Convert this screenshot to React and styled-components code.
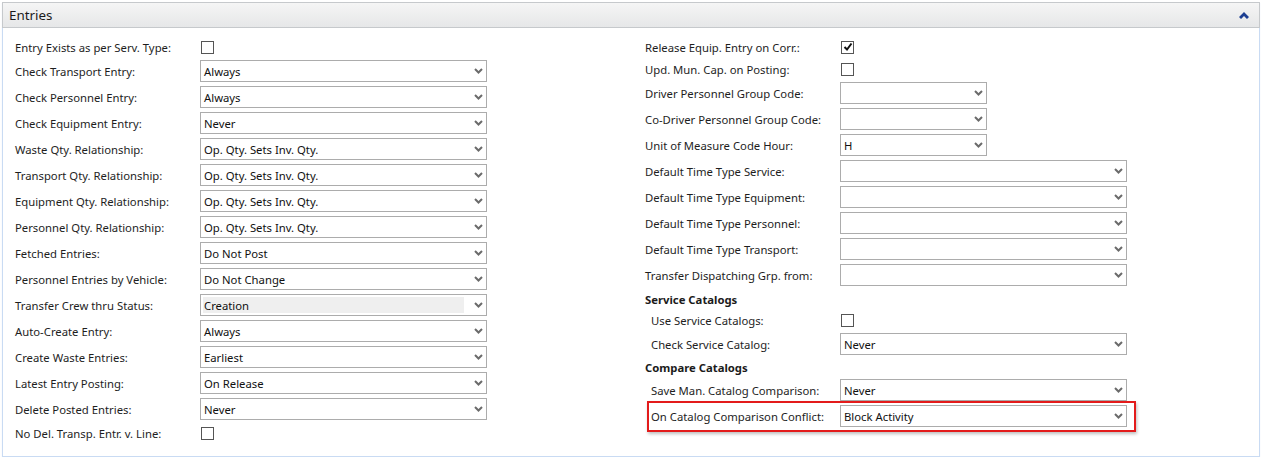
import React from 'react';
import styled, { createGlobalStyle } from 'styled-components';

const GlobalStyle = createGlobalStyle`
  body {
    margin: 0;
    background: #ffffff;
    font-family: "Noto Sans", "Open Sans", Arial, sans-serif;
    color: #1e1e1e;
  }
`;

const Panel = styled.section`
  margin: 2px 3px 0 2px;
  height: 455px;
  box-sizing: border-box;
  border: 1px solid #c9dbf3;
  border-top: none;
  box-shadow: 0 1px 1px #e3ecf8;
  display: flex;
  flex-direction: column;
`;

const Header = styled.header`
  height: 26px;
  box-sizing: border-box;
  margin: 0 -1px;
  border: 1px solid #c6c9cc;
  background: linear-gradient(to bottom, #f5f5f5, #e6e7e8);
  display: flex;
  align-items: center;
  justify-content: space-between;
  padding: 0 10px 0 6px;
`;

const Title = styled.h2`
  margin: 0;
  font-size: 13.4px;
  font-weight: 400;
  color: #1b1b1b;
`;

const Body = styled.div`
  flex: 1;
  display: grid;
  grid-template-columns: 630px 1fr;
  padding: 8px 0 0 12px;
`;

const Column = styled.div`
  display: flex;
  flex-direction: column;
`;

const Row = styled.div`
  display: flex;
  align-items: center;
  height: ${(p) => (p.$check ? '22px' : '26px')};
  ${(p) => p.$tall && 'height: 21px;'}
`;

const Label = styled.span`
  width: ${(p) => p.$width}px;
  flex: none;
  font-size: 11.3px;
  white-space: nowrap;
  padding-left: ${(p) => p.$indent || 0}px;
  box-sizing: border-box;
`;

const Heading = styled.div`
  height: ${(p) => p.$h}px;
  display: flex;
  align-items: center;
  font-size: 11.3px;
  font-weight: 700;
  color: #1b1b1b;
`;

const Box = styled.span`
  width: 13px;
  height: 13px;
  box-sizing: border-box;
  border: 1px solid #555;
  background: #fff;
  display: flex;
  align-items: center;
  justify-content: center;
  margin-left: 1px;
`;

const SelectBox = styled.div`
  width: ${(p) => p.$width}px;
  height: 22px;
  box-sizing: border-box;
  border: 1px solid #acacac;
  background: #fff;
  display: flex;
  align-items: center;
  padding: 0 3px 0 2px;
  font-size: 11.3px;
  color: #111;
`;

const Value = styled.span`
  flex: 1;
  align-self: stretch;
  display: flex;
  align-items: center;
  padding-left: 1px;
  margin: 2px 10px 2px 0;
  background: ${(p) => (p.$grey ? '#efefef' : 'transparent')};
`;

const Highlight = styled.div`
  position: relative;
  &::after {
    content: '';
    position: absolute;
    left: 2px;
    top: -2px;
    width: 489px;
    height: 31px;
    box-sizing: border-box;
    border: 2px solid #e31b1b;
    box-shadow: 1px 2px 3px rgba(0, 0, 0, 0.25);
    pointer-events: none;
  }
`;

function Chevron() {
  return (
    <svg width="9" height="6" viewBox="0 0 9 6">
      <path d="M1 1 L4.5 4.5 L8 1" fill="none" stroke="#6b6b6b" strokeWidth="2" />
    </svg>
  );
}

function Checkbox({ checked }) {
  return (
    <Box>
      {checked && (
        <svg width="10" height="10" viewBox="0 0 10 10">
          <path d="M1.5 5 L4 7.5 L8.5 1.5" fill="none" stroke="#111" strokeWidth="2" />
        </svg>
      )}
    </Box>
  );
}

function Select({ value, width = 287, grey }) {
  return (
    <SelectBox $width={width}>
      <Value $grey={grey}>{value}</Value>
      <Chevron />
    </SelectBox>
  );
}

function Field({ label, labelWidth, indent, check, checked, value, width, grey }) {
  return (
    <Row $check={check}>
      <Label $width={labelWidth} $indent={indent}>
        {label}
      </Label>
      {check ? <Checkbox checked={checked} /> : <Select value={value} width={width} grey={grey} />}
    </Row>
  );
}

const leftFields = [
  { label: 'Entry Exists as per Serv. Type:', check: true },
  { label: 'Check Transport Entry:', value: 'Always' },
  { label: 'Check Personnel Entry:', value: 'Always' },
  { label: 'Check Equipment Entry:', value: 'Never' },
  { label: 'Waste Qty. Relationship:', value: 'Op. Qty. Sets Inv. Qty.' },
  { label: 'Transport Qty. Relationship:', value: 'Op. Qty. Sets Inv. Qty.' },
  { label: 'Equipment Qty. Relationship:', value: 'Op. Qty. Sets Inv. Qty.' },
  { label: 'Personnel Qty. Relationship:', value: 'Op. Qty. Sets Inv. Qty.' },
  { label: 'Fetched Entries:', value: 'Do Not Post' },
  { label: 'Personnel Entries by Vehicle:', value: 'Do Not Change' },
  { label: 'Transfer Crew thru Status:', value: 'Creation', grey: true },
  { label: 'Auto-Create Entry:', value: 'Always' },
  { label: 'Create Waste Entries:', value: 'Earliest' },
  { label: 'Latest Entry Posting:', value: 'On Release' },
  { label: 'Delete Posted Entries:', value: 'Never' },
  { label: 'No Del. Transp. Entr. v. Line:', check: true },
];

const rightFields = [
  { label: 'Release Equip. Entry on Corr.:', check: true, checked: true },
  { label: 'Upd. Mun. Cap. on Posting:', check: true },
  { label: 'Driver Personnel Group Code:', value: '', width: 147 },
  { label: 'Co-Driver Personnel Group Code:', value: '', width: 147 },
  { label: 'Unit of Measure Code Hour:', value: 'H', width: 147 },
  { label: 'Default Time Type Service:', value: '' },
  { label: 'Default Time Type Equipment:', value: '' },
  { label: 'Default Time Type Personnel:', value: '' },
  { label: 'Default Time Type Transport:', value: '' },
  { label: 'Transfer Dispatching Grp. from:', value: '' },
];

export default function App() {
  return (
    <>
      <GlobalStyle />
      <Panel>
        <Header>
          <Title>Entries</Title>
          <svg width="10" height="7" viewBox="0 0 10 7">
            <path d="M0 5 L5 0 L10 5 L8 7 L5 4 L2 7 Z" fill="#1d3f92" />
          </svg>
        </Header>
        <Body>
          <Column>
            {leftFields.map((f) => (
              <Field key={f.label} labelWidth={185} {...f} />
            ))}
          </Column>
          <Column>
            {rightFields.map((f) => (
              <Field key={f.label} labelWidth={195} {...f} />
            ))}
            <Heading $h={22}>Service Catalogs</Heading>
            <Row $check $tall>
              <Label $width={195} $indent={6}>Use Service Catalogs:</Label>
              <Checkbox />
            </Row>
            <Field label="Check Service Catalog:" labelWidth={195} indent={6} value="Never" />
            <Heading $h={20}>Compare Catalogs</Heading>
            <Field label="Save Man. Catalog Comparison:" labelWidth={195} indent={6} value="Never" />
            <Highlight>
              <Field label="On Catalog Comparison Conflict:" labelWidth={195} indent={6} value="Block Activity" />
            </Highlight>
          </Column>
        </Body>
      </Panel>
    </>
  );
}
